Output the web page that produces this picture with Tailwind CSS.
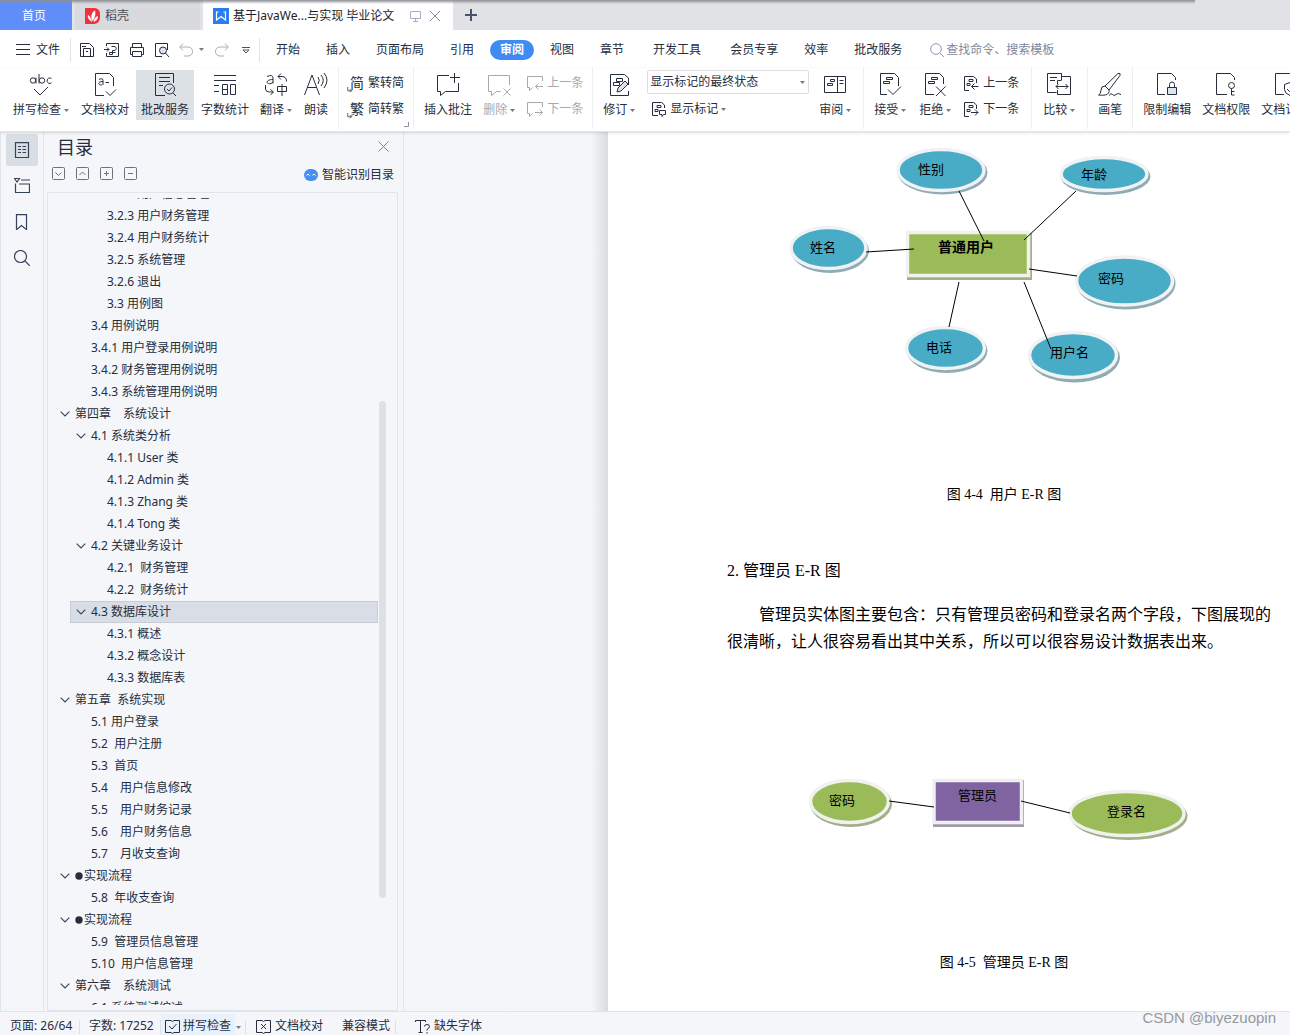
<!DOCTYPE html>
<html lang="zh-CN">
<head>
<meta charset="utf-8">
<meta name="viewport" content="width=device-width, initial-scale=1">
<title>基于JavaWe...与实现 毕业论文</title>
<script src="https://cdn.jsdelivr.net/npm/@tailwindcss/browser@4"></script>
</head>
<body class="relative flex h-screen flex-col overflow-hidden bg-[#f5f6f9] font-['Noto_Sans','Noto_Sans_CJK_SC',sans-serif] text-xs text-[#262d3d]">

<!-- shared symbols -->
<svg class="hidden">
  <symbol id="down" viewBox="0 0 5 3"><path d="M0 0h5L2.500 3z" fill="#6f7a8c"/></symbol>
  <symbol id="chev" viewBox="0 0 10 6"><path d="M.7.700 5 5 9.300.700" fill="none" stroke="#3a4254" stroke-width="1.100"/></symbol>
</svg>

<!-- window tabs -->
<header class="flex h-[30px] shrink-0 bg-[#e1e2e6] leading-4">
  <button class="h-full w-[72px] bg-[#5f8efa] pr-1 pt-[2px] text-white">首页</button>
  <button class="ml-[3px] flex w-[125px] items-center gap-1 bg-[#d9dadd] pl-[10px] pt-[2px] text-[#4a4f59]">
    <svg class="size-4" viewBox="0 0 16 16"><path d="M0 0h10a6 6 0 0 1 5 6v4a6 6 0 0 1-6 6H0z" fill="#ee3340"/><path d="M7 14C4 12 2 9 3 7c2 1 3 3 4 7zM7.500 13C5 8 7 4 10 2.500c1 3 0 8-2.500 10.500zM8.500 14c.5-3 2-5.500 4.500-6 0 3-1.500 5-4.500 6z" fill="#fff"/></svg>
    稻壳</button>
  <div class="ml-[3px] flex w-[250px] items-center bg-white pl-[10px] pt-[2px] text-[#1d222c]">
    <svg class="size-4" viewBox="0 0 16 16"><rect width="16" height="16" fill="#2a7cf3"/><path d="M5.500 4H3.500v8L8 8.500l4.500 3.500V4h-2" fill="none" stroke="#fff" stroke-width="1.200"/></svg>
    <button class="ml-1 whitespace-nowrap">基于JavaWe...与实现 毕业论文</button>
    <button class="ml-4" aria-label="显示器"><svg class="block h-3 w-[11px]" viewBox="0 0 11 12" fill="none" stroke="#a7b0c4"><path d="M.5 1.500h10v7H.5zM5.500 8.500v3M3 11.500h5"/></svg></button>
    <button class="ml-2 text-[#7d89a5]" aria-label="关闭标签"><svg class="block size-3" viewBox="0 0 12 12" fill="none" stroke="currentColor"><path d="m1 1 10 10M11 1 1 11"/></svg></button>
  </div>
  <button class="ml-3 text-[#49536b]" aria-label="新建"><svg class="size-3" viewBox="0 0 12 12" fill="none" stroke="currentColor" stroke-width="2"><path d="M6 0v12M0 6h12"/></svg></button>
</header>
<div class="pointer-events-none absolute left-0 top-0 h-1 w-[1195px] bg-linear-to-b from-[#8d8e92] to-transparent"></div>

<!-- menu row -->
<nav class="flex h-[38px] shrink-0 items-center whitespace-nowrap bg-white pl-4 pt-px leading-5">
  <button class="flex w-[54px] items-center gap-[6px]"><svg class="h-[11px] w-[14px]" viewBox="0 0 14 11" stroke="#262d3d"><path d="M0 .5h14M0 5.500h14M0 10.500h14"/></svg>文件</button>
  <span class="h-6 w-px bg-[#e0e2e6]"></span>
  <div class="ml-2 flex items-center gap-[9px] text-[#262d3d]">
    <button aria-label="保存"><svg class="block size-4" viewBox="0 0 16 16" fill="none" stroke="currentColor"><path d="M1.500 1.500h9l4 4v9h-13zM4.500 14.500v-8h7v8M3 4.500h4M7 9.500h2"/></svg></button>
    <button aria-label="输出PDF"><svg class="block size-4" viewBox="0 0 16 16" fill="none" stroke="currentColor"><path d="M2.500 4V1.500h12v13h-12V11M0 7.500h5M3 5.500l2 2-2 2M7.500 4.500H10c3 0 3 4 0 4H8.500v4H5.500v-2h6"/></svg></button>
    <button aria-label="打印"><svg class="block size-4" viewBox="0 0 16 16" fill="none" stroke="currentColor"><path d="M3.500 5.500v-4h9v4M3.500 12.500h-2v-7h13v7h-2M3.500 9.500h9v5h-9z"/></svg></button>
    <button aria-label="打印预览"><svg class="block size-4" viewBox="0 0 16 16" fill="none" stroke="currentColor"><path d="M8 14.500H1.500v-13h12V8"/><circle cx="9" cy="8.500" r="3.500" fill="#dfe3ea"/><path d="m11.500 11 3.500 4"/></svg></button>
    <button class="flex items-center gap-[6px] text-[#a9adb8]" aria-label="撤销"><svg class="block h-4 w-[14px]" viewBox="0 0 14 16" fill="none" stroke="currentColor"><path d="M4 1.500.700 5 4 8.500M1 5h8c6 0 6 9 0 9H5"/></svg><svg class="h-[3px] w-[5px]"><use href="#down"/></svg></button>
    <button class="ml-[2px] text-[#a9adb8]" aria-label="恢复"><svg class="block h-4 w-[14px]" viewBox="0 0 14 16" fill="none" stroke="currentColor"><path d="M10 1.500 13.300 5 10 8.500M13 5H5c-6 0-6 9 0 9h4"/></svg></button>
    <button class="ml-1" aria-label="更多"><svg class="block size-2" viewBox="0 0 8 8" fill="none" stroke="#4c5464"><path d="M0 1.500h8M1 4l3 3 3-3z"/></svg></button>
  </div>
  <span class="ml-[9px] h-6 w-px bg-[#e0e2e6]"></span>
  <div class="ml-4 flex items-center gap-[26px]">
    <button>开始</button><button>插入</button><button>页面布局</button><button>引用</button>
    <button class="-mx-[10px] rounded-full bg-[#3f8bf3] px-[10px] font-bold text-white">审阅</button>
    <button>视图</button><button>章节</button><button class="px-[3px]">开发工具</button><button>会员专享</button><button>效率</button><button>批改服务</button>
  </div>
  <label class="ml-7 flex grow items-center gap-[2px]"><svg class="size-[14px]" viewBox="0 0 14 14" fill="none" stroke="#8f9bb3"><circle cx="6" cy="6" r="5.300"/><path d="m10 10 4 4"/></svg>
    <input class="w-40 outline-none placeholder:text-[#7d88a3] placeholder:opacity-100" placeholder="查找命令、搜索模板" aria-label="查找命令"></label>
</nav>

<!-- ribbon -->
<div class="z-10 flex h-16 shrink-0 overflow-hidden whitespace-nowrap border-b border-[#e3e5e8] bg-white leading-5 shadow-sm">
  <section class="flex shrink-0 items-start gap-[2px] pl-2 pr-1 pt-[2px]">
    <button class="flex flex-col items-center px-[5px] pt-[2px]"><svg class="mb-[2px] h-[26px] w-6" viewBox="0 0 24 26" fill="none" stroke="#262d3d"><g><circle cx="4" cy="8.500" r="2.700"/><path d="M7 5.500v6M10 2v9.500"/><circle cx="13" cy="8.500" r="2.700"/><path d="M22.500 6.500c-5-2.500-6 5-1.500 5l1.500-.8M5 17l6 6 8-8"/></g></svg><span class="flex items-center gap-[3px]">拼写检查<svg class="h-[3px] w-[5px]"><use href="#down"/></svg></span></button>
    <button class="flex flex-col items-center px-[5px] pt-[2px]"><svg class="mb-[2px] h-[26px] w-6" viewBox="0 0 24 26" fill="none" stroke="#262d3d"><path d="M11 23.500H2.500v-22h14l4 4V14M6 7.500q4-2 4 1v4.500M10 9.500c-6 0-5 4-1 3.500M12.500 10.500H16M13 19.500l4 4 6-6"/></svg>文档校对</button>
    <button class="flex flex-col items-center bg-[#dce1e6] px-[5px] pt-[2px]"><svg class="mb-[2px] h-[26px] w-6" viewBox="0 0 24 26" fill="none" stroke="#262d3d"><path d="M12 23.500H2.500v-22h18V11M6 5.500h11M6 9.500h11M6 13.500h4"/><circle cx="16.500" cy="17" r="5"/><path d="m20 21 3 3M14 17l2 2 3-3.500"/></svg>批改服务</button>
    <button class="flex flex-col items-center px-[5px] pt-[2px]"><svg class="mb-[2px] h-[26px] w-6" viewBox="0 0 24 26" fill="none" stroke="#262d3d"><path d="M1 3.500h22M1 8.500h22M1 13.500h5M1 19.500h5M9.500 12.500h5v10h-5zM9.500 17.500h5M17.500 12.500h5v10h-5z"/></svg>字数统计</button>
    <button class="flex flex-col items-center px-[4px] pt-[2px]"><svg class="mb-[2px] h-[26px] w-6" viewBox="0 0 24 26" fill="none" stroke="#262d3d"><path d="M3 4.500q6-2.500 6 1.500v5.500M9 7.500c-8 0-7 5.500-2 4l2-1.500M17 1.500l-3 3 3 3M14 4.500h4q4.500 0 4.500 5M1.500 13v4q0 3 4 3H9M6.500 17.500l3 2.500-3 3M13.500 14.500h9v5h-9zM18 12v12"/></svg><span class="flex items-center gap-[3px]">翻译<svg class="h-[3px] w-[5px]"><use href="#down"/></svg></span></button>
    <button class="flex flex-col items-center px-[6px] pt-[2px]"><svg class="mb-[2px] h-[26px] w-6" viewBox="0 0 24 26" fill="none" stroke="#262d3d"><path d="M.5 23 8 3l7.500 20M3.500 15.500h9M14 5q2.500 3 0 7M17 3q4.500 5 0 11M20 1q6 7 0 15"/></svg>朗读</button>
  </section>
  <span class="h-[61px] w-px shrink-0 bg-[#eceef0]"></span>
  <section class="relative flex shrink-0 flex-col gap-[6px] px-[9px] pt-[5px]">
    <button class="flex items-center gap-1"><span class="relative w-4 text-right text-sm leading-5">简<svg class="absolute -left-px bottom-0 size-[6px]" viewBox="0 0 8 8" fill="none" stroke="#262d3d"><path d="M1 0v5h5M4 3l2 2-2 2"/></svg></span>繁转简</button>
    <button class="flex items-center gap-1"><span class="relative w-4 text-right text-sm leading-5">繁<svg class="absolute -left-px bottom-0 size-[6px]" viewBox="0 0 8 8" fill="none" stroke="#262d3d"><path d="M1 0v5h5M4 3l2 2-2 2"/></svg></span>简转繁</button>
    <svg class="absolute bottom-1 right-1 size-[5px]" viewBox="0 0 5 5" fill="none" stroke="#8d94a3"><path d="M0 4.500h4.500V0"/></svg>
  </section>
  <span class="h-[61px] w-px shrink-0 bg-[#eceef0]"></span>
  <section class="flex shrink-0 items-start gap-px pl-[5px] pr-[9px] pt-[2px]">
    <button class="flex flex-col items-center px-[5px] pt-[2px]"><svg class="mb-[2px] h-[26px] w-6" viewBox="0 0 24 26" fill="none" stroke="#262d3d"><path d="M13 3.500H1.500v16h3v4l5-4h13V11M18.500 1v10M14 5.500h10"/></svg>插入批注</button>
    <button class="flex flex-col items-center px-[5px] pt-[2px] text-[#a7a9ae]" disabled><svg class="mb-[2px] h-[26px] w-6" viewBox="0 0 24 26" fill="none" stroke="currentColor"><path d="M22.500 13V3.500h-21v16h3v4l5-4h4M16.500 16.500l7 7M23.500 16.500l-7 7"/></svg><span class="flex items-center gap-[3px]">删除<svg class="h-[3px] w-[5px]"><use href="#down"/></svg></span></button>
    <div class="ml-[6px] flex flex-col gap-[6px] pt-[3px] text-[#a7a9ae]">
      <button class="flex items-center gap-1" disabled><svg class="size-4" viewBox="0 0 16 16" fill="none" stroke="currentColor"><path d="M15.500 6V1.500H.5v11h2v3l3-3M16 11.500H8.500M11.500 8.500l-3 3 3 3"/></svg>上一条</button>
      <button class="flex items-center gap-1" disabled><svg class="size-4" viewBox="0 0 16 16" fill="none" stroke="currentColor"><path d="M15.500 6V1.500H.5v11h2v3l3-3M8 11.500h7.500M12.500 8.500l3 3-3 3"/></svg>下一条</button>
    </div>
  </section>
  <span class="h-[61px] w-px shrink-0 bg-[#eceef0]"></span>
  <section class="flex shrink-0 items-start gap-[7px] px-[5px] pt-[2px]">
    <button class="flex flex-col items-center px-[5px] pt-[2px]"><svg class="mb-[2px] h-[26px] w-6" viewBox="0 0 24 26" fill="none" stroke="#262d3d"><path d="M21.500 13V6l-4-3.500h-14v21h18V19M9.500 6.500h6v3h-6zM6.500 10.500h6v3h-6z"/><path d="m10 20 1-4 7-7 3 3-7 7z" fill="#dfe3ea"/></svg><span class="flex items-center gap-[3px]">修订<svg class="h-[3px] w-[5px]"><use href="#down"/></svg></span></button>
    <div class="flex w-[162px] flex-col">
      <div class="relative"><select class="block h-6 w-full appearance-none rounded-xs border border-[#dcdee2] pl-[2px] leading-5" aria-label="显示方式"><option>显示标记的最终状态</option></select><svg class="pointer-events-none absolute right-1 top-[11px] h-[3px] w-[5px]"><use href="#down"/></svg></div>
      <button class="mt-[5px] flex items-center gap-[3px] pl-1"><svg class="size-4" viewBox="0 0 16 16" fill="none" stroke="#262d3d"><path d="M7 14.500H1.500v-13h9l3 2.500v3M6 4.500h4v2H6zM4 8.500h3v2H4zM8.500 9.500h6v4h-2l-1.500 2v-2H8.500z"/></svg>显示标记<svg class="h-[3px] w-[5px]"><use href="#down"/></svg></button>
    </div>
    <button class="flex flex-col items-center px-[3px] pt-[2px]"><svg class="mb-[2px] h-[26px] w-6" viewBox="0 0 24 26" fill="none" stroke="#262d3d"><path d="M1.500 4.500h21v16h-21zM14.500 4.500v16M16.500 8.500h4M16.500 11.500h4M7.500 7.500h4v2h-4zM4.500 11.500h5v2h-5z"/></svg><span class="flex items-center gap-[3px]">审阅<svg class="h-[3px] w-[5px]"><use href="#down"/></svg></span></button>
  </section>
  <span class="ml-1 h-[61px] w-px shrink-0 bg-[#eceef0]"></span>
  <section class="flex shrink-0 items-start gap-[3px] pl-[5px] pr-3 pt-[2px]">
    <button class="flex flex-col items-center px-[5px] pt-[2px]"><svg class="mb-[2px] h-[26px] w-6" viewBox="0 0 24 26" fill="none" stroke="#262d3d"><path d="M9 22.500H2.500v-21h14l4 4V14M8.500 5.500h6v2h-6zM5.500 9.500h6v2h-6zM10 17.500l5 5 8-8"/></svg><span class="flex items-center gap-[3px]">接受<svg class="h-[3px] w-[5px]"><use href="#down"/></svg></span></button>
    <button class="flex flex-col items-center px-[5px] pt-[2px]"><svg class="mb-[2px] h-[26px] w-6" viewBox="0 0 24 26" fill="none" stroke="#262d3d"><path d="M11 22.500H2.500v-21h14l4 4V12M8.500 5.500h6v2h-6zM5.500 9.500h6v2h-6zM13 14.500l9.500 9.500M22.500 14.500 13 24"/></svg><span class="flex items-center gap-[3px]">拒绝<svg class="h-[3px] w-[5px]"><use href="#down"/></svg></span></button>
    <div class="ml-1 flex flex-col gap-[6px] pt-[3px]">
      <button class="flex items-center gap-1"><svg class="size-4" viewBox="0 0 16 16" fill="none" stroke="#262d3d"><path d="M6 15.500H1.500v-14h9l3 2.500v4M6 4.500h4v2H6zM4 8.500h3v2H4zM15.500 11.500H8.500M11.500 8.500l-3 3 3 3"/></svg>上一条</button>
      <button class="flex items-center gap-1"><svg class="size-4" viewBox="0 0 16 16" fill="none" stroke="#262d3d"><path d="M6 15.500H1.500v-14h9l3 2.500v4M6 4.500h4v2H6zM4 8.500h3v2H4zM8 11.500h7M12 8.500l3 3-3 3"/></svg>下一条</button>
    </div>
  </section>
  <span class="h-[61px] w-px shrink-0 bg-[#eceef0]"></span>
  <section class="flex shrink-0 items-start pl-[6px] pr-[7px] pt-[2px]">
    <button class="flex flex-col items-center px-[5px] pt-[2px]"><svg class="mb-[2px] h-[26px] w-6" viewBox="0 0 24 26" fill="none" stroke="#262d3d"><path d="M14.500 8V1.500H.5v19h9M3 5.500h7M3 8.500h5M14.500 4.500h9v18h-13V18M10.500 12V8.500h4M9 14.500h12M11.500 12 9 14.500l2.500 2.500M18.500 12l2.500 2.500-2.500 2.500"/></svg><span class="flex items-center gap-[3px]">比较<svg class="h-[3px] w-[5px]"><use href="#down"/></svg></span></button>
  </section>
  <span class="h-[61px] w-px shrink-0 bg-[#eceef0]"></span>
  <section class="flex shrink-0 items-start px-[5px] pt-[2px]">
    <button class="flex flex-col items-center px-[5px] pt-[2px]"><svg class="mb-[2px] h-[26px] w-6" viewBox="0 0 24 26" fill="none" stroke="#262d3d"><path d="M7 14 20 1.500q3-1 2 2L11 18M7 14l4 4M7 14q-4 0-4 4 0 4-2.500 5Q9 24 10.500 21q1-1.500.5-3M11 23.500q2-3 3.500-1t3.500 0 5 0"/></svg>画笔</button>
  </section>
  <span class="h-[61px] w-px shrink-0 bg-[#eceef0]"></span>
  <section class="flex shrink-0 items-start gap-px pl-[5px] pt-[2px]">
    <button class="flex flex-col items-center px-[5px] pt-[2px]"><svg class="mb-[2px] h-[26px] w-6" viewBox="0 0 24 26" fill="none" stroke="#262d3d"><path d="M10 22.500H2.500v-21h14l4 4V8M14.500 15v-2.500q0-2.500 2.500-2.500t2.500 2.500V15"/><path d="M12.500 15.500h9v7h-9z" fill="#dfe3ea"/></svg>限制编辑</button>
    <button class="flex flex-col items-center px-[5px] pt-[2px]"><svg class="mb-[2px] h-[26px] w-6" viewBox="0 0 24 26" fill="none" stroke="#262d3d"><path d="M13 22.500H2.500v-21h14l4 4V8"/><circle cx="17.500" cy="13.500" r="3"/><path d="M17.500 16.500v6.500h3M17.500 19.500h3"/></svg>文档权限</button>
    <button class="flex flex-col items-center px-[5px] pt-[2px]"><svg class="mb-[2px] h-[26px] w-6" viewBox="0 0 24 26" fill="none" stroke="#262d3d"><path d="M11 22.500H2.500v-21h14l4 4V8M11.500 12.500l5.500-2 5.500 2v5q0 4-5.500 6-5.500-2-5.500-6zM14 17l2.500 2.500L20 16"/></svg>文档认证</button>
  </section>
</div>

<main class="flex min-h-0 grow">
  <!-- icon rail -->
  <aside class="flex w-11 shrink-0 flex-col items-center gap-1 border-x border-[#e1e4ea] pt-[2px] text-[#36415a]">
    <button class="flex size-8 items-center justify-center rounded-xs bg-[#d9dee5]" aria-label="目录"><svg class="size-4" viewBox="0 0 16 16" fill="none" stroke="currentColor" stroke-width="1.200"><path d="M1.500.600h13v15h-13zM4 4.500h3M4 7.500h3M4 10.500h3M8.500 4.500H12M8.500 7.500H12M8.500 10.500H12"/></svg></button>
    <button class="flex size-8 items-center justify-center" aria-label="章节导航"><svg class="size-4" viewBox="0 0 16 16" fill="none" stroke="currentColor" stroke-width="1.200"><path d="M.5.500h5L3 4zM7 2h9M1.500 5.500v9h14V6H5"/></svg></button>
    <button class="flex size-8 items-center justify-center" aria-label="书签"><svg class="size-4" viewBox="0 0 16 16" fill="none" stroke="currentColor" stroke-width="1.200"><path d="M2.500.600h10v15l-5-4-5 4z"/></svg></button>
    <button class="flex size-8 items-center justify-center" aria-label="查找"><svg class="size-4" viewBox="0 0 16 16" fill="none" stroke="currentColor" stroke-width="1.200"><circle cx="6.500" cy="6.500" r="6"/><path d="m11 11 5 5"/></svg></button>
  </aside>

  <!-- outline panel -->
  <section class="flex w-[360px] shrink-0 flex-col border-r border-[#e1e4ea] pl-[3px] pr-[5px]">
    <div class="flex h-[29px] shrink-0 items-center justify-between pl-[10px] pr-[9px]">
      <h1 class="text-lg leading-7">目录</h1>
      <button aria-label="关闭"><svg class="block size-[11px]" viewBox="0 0 11 11" stroke="#7f8795"><path d="m.5.5 10 10M10.500.5l-10 10"/></svg></button>
    </div>
    <div class="flex h-[31px] shrink-0 items-start gap-[11px] pl-[5px] pr-1 pt-[6px] text-[#6c727d]">
      <button aria-label="展开"><svg class="block size-[13px]" viewBox="0 0 13 13" fill="none" stroke="currentColor"><rect x=".5" y=".5" width="12" height="12" rx="1"/><path d="m3.500 5.500 3 3 3-3"/></svg></button>
      <button aria-label="折叠"><svg class="block size-[13px]" viewBox="0 0 13 13" fill="none" stroke="currentColor"><rect x=".5" y=".5" width="12" height="12" rx="1"/><path d="m3.500 8 3-3 3 3"/></svg></button>
      <button aria-label="增加级别"><svg class="block size-[13px]" viewBox="0 0 13 13" fill="none" stroke="currentColor"><rect x=".5" y=".5" width="12" height="12" rx="1"/><path d="M4 6.500h5M6.500 4v5"/></svg></button>
      <button aria-label="减少级别"><svg class="block size-[13px]" viewBox="0 0 13 13" fill="none" stroke="currentColor"><rect x=".5" y=".5" width="12" height="12" rx="1"/><path d="M4 6.500h5"/></svg></button>
      <button class="ml-auto flex items-center gap-1 leading-4 text-[#262d3d]"><svg class="h-3 w-[14px]" viewBox="0 0 14 12"><rect width="14" height="12" rx="6" fill="#4690f0"/><path d="M2.500 6.500 4 5l1.500 1.500M8.500 6.500 10 5l1.500 1.500" fill="none" stroke="#fff"/></svg>智能识别目录</button>
    </div>
    <div class="relative min-h-0 grow basis-0 overflow-hidden rounded-xs border border-[#e1e4ea] py-[5px]">
      <div class="h-full overflow-hidden">
      <ul class="-mt-[15px] leading-[22px] *:whitespace-pre">
        <li class="pl-[59px]">3.2.2 用户信息管理</li>
        <li class="pl-[59px]">3.2.3 用户财务管理</li>
        <li class="pl-[59px]">3.2.4 用户财务统计</li>
        <li class="pl-[59px]">3.2.5 系统管理</li>
        <li class="pl-[59px]">3.2.6 退出</li>
        <li class="pl-[59px]">3.3 用例图</li>
        <li class="pl-[43px]">3.4 用例说明</li>
        <li class="pl-[43px]">3.4.1 用户登录用例说明</li>
        <li class="pl-[43px]">3.4.2 财务管理用例说明</li>
        <li class="pl-[43px]">3.4.3 系统管理用例说明</li>
        <li class="flex items-center gap-[5px] pl-3"><svg class="h-[6px] w-[10px]"><use href="#chev"/></svg>第四章　系统设计</li>
        <li class="flex items-center gap-[5px] pl-[28px]"><svg class="h-[6px] w-[10px]"><use href="#chev"/></svg>4.1 系统类分析</li>
        <li class="pl-[59px]">4.1.1 User 类</li>
        <li class="pl-[59px]">4.1.2 Admin 类</li>
        <li class="pl-[59px]">4.1.3 Zhang 类</li>
        <li class="pl-[59px]">4.1.4 Tong 类</li>
        <li class="flex items-center gap-[5px] pl-[28px]"><svg class="h-[6px] w-[10px]"><use href="#chev"/></svg>4.2 关键业务设计</li>
        <li class="pl-[59px]">4.2.1  财务管理</li>
        <li class="pl-[59px]">4.2.2  财务统计</li>
        <li class="ml-[22px] mr-[19px] flex items-center gap-[5px] bg-[#d9dde5] pl-[6px] outline-1 -outline-offset-1 outline-[#c6cdd5]"><svg class="h-[6px] w-[10px]"><use href="#chev"/></svg>4.3 数据库设计</li>
        <li class="pl-[59px]">4.3.1 概述</li>
        <li class="pl-[59px]">4.3.2 概念设计</li>
        <li class="pl-[59px]">4.3.3 数据库表</li>
        <li class="flex items-center gap-[5px] pl-3"><svg class="h-[6px] w-[10px]"><use href="#chev"/></svg>第五章  系统实现</li>
        <li class="pl-[43px]">5.1 用户登录</li>
        <li class="pl-[43px]">5.2  用户注册</li>
        <li class="pl-[43px]">5.3  首页</li>
        <li class="pl-[43px]">5.4　用户信息修改</li>
        <li class="pl-[43px]">5.5　用户财务记录</li>
        <li class="pl-[43px]">5.6　用户财务信息</li>
        <li class="pl-[43px]">5.7　月收支查询</li>
        <li class="flex items-center pl-3"><svg class="mr-[5px] h-[6px] w-[10px]"><use href="#chev"/></svg><svg class="mr-px size-2" viewBox="0 0 8 8"><circle cx="4" cy="4" r="3.700" fill="#262d3d"/></svg>实现流程</li>
        <li class="pl-[43px]">5.8  年收支查询</li>
        <li class="flex items-center pl-3"><svg class="mr-[5px] h-[6px] w-[10px]"><use href="#chev"/></svg><svg class="mr-px size-2" viewBox="0 0 8 8"><circle cx="4" cy="4" r="3.700" fill="#262d3d"/></svg>实现流程</li>
        <li class="pl-[43px]">5.9  管理员信息管理</li>
        <li class="pl-[43px]">5.10  用户信息管理</li>
        <li class="flex items-center gap-[5px] pl-3"><svg class="h-[6px] w-[10px]"><use href="#chev"/></svg>第六章　系统测试</li>
        <li class="pl-[43px]">6.1 系统测试综述</li>
      </ul>
      </div>
      <div class="absolute right-[11px] top-[208px] h-[497px] w-[7px] rounded-full bg-[#dde1e4]"></div>
    </div>
  </section>

  <!-- document area -->
  <section class="flex min-w-0 grow">
    <div class="w-[204px] shrink-0 bg-linear-to-l from-[#dadbde] to-[#f5f6f9] to-8%"></div>
    <article class="min-w-0 grow overflow-hidden bg-white pl-[119px] pr-[9px] font-['Liberation_Serif','Noto_Sans_CJK_SC',serif] text-black">
      <svg class="block h-[268px] w-[554px]" viewBox="727 132 554 268" font-size="13">
        <g fill="#8fabb5"><ellipse cx="942.500" cy="172.500" rx="45" ry="22"/><ellipse cx="1105.500" cy="176.500" rx="45" ry="18.500"/><ellipse cx="830" cy="250.500" rx="39" ry="22.500"/><ellipse cx="1126" cy="283.500" rx="49.500" ry="26"/><ellipse cx="947" cy="350.500" rx="40.500" ry="22.500"/><ellipse cx="1074.500" cy="357.500" rx="45.500" ry="25"/></g>
        <g fill="#49acc6" stroke="#f0f2f4" stroke-width="3.500"><ellipse cx="941" cy="170" rx="43" ry="20.500"/><ellipse cx="1104" cy="174" rx="43" ry="16.500"/><ellipse cx="828.500" cy="248" rx="37.500" ry="20.500"/><ellipse cx="1124.500" cy="281" rx="48" ry="24"/><ellipse cx="945.500" cy="348" rx="39" ry="20.500"/><ellipse cx="1073" cy="355" rx="43.500" ry="22.500"/></g>
        <path d="M907 233h125v47H907z" fill="#a5ae8b"/><path d="M907.500 232.500h121v43h-121z" fill="#9bbb59" stroke="#f0f2ee" stroke-width="3.500"/>
        <path d="M959 191l25 50M1076 191l-52 49M866 252l48-3M1029 269l48 7M959 282l-10 45M1024 282l27 67" stroke="#000" fill="none"/>
        <text x="918" y="174">性别</text><text x="1081" y="179">年龄</text><text x="810" y="252">姓名</text><text x="1098" y="283">密码</text><text x="926" y="352">电话</text><text x="1050" y="357">用户名</text>
        <text x="938" y="252" font-size="14" font-weight="bold">普通用户</text>
      </svg>
      <p class="mt-[85px] text-center text-sm leading-5">图 4-4&nbsp; 用户 E-R 图</p>
      <h2 class="mt-[54px] text-base leading-6">2. 管理员 E-R 图</h2>
      <p class="mt-[18px] indent-[2em] text-base leading-[27px]">管理员实体图主要包含：只有管理员密码和登录名两个字段，下图展现的很清晰，让人很容易看出其中关系，所以可以很容易设计数据表出来。</p>
      <svg class="mt-[103px] block h-[100px] w-[554px]" viewBox="727 760 554 100" font-size="13">
        <g fill="#a4ad8c"><ellipse cx="851" cy="806" rx="41" ry="23"/><ellipse cx="1129" cy="818" rx="58.500" ry="24"/></g>
        <g fill="#9bbb59" stroke="#f0f2ee" stroke-width="3.500"><ellipse cx="849.500" cy="803.500" rx="39" ry="21"/><ellipse cx="1127" cy="815.500" rx="57" ry="22"/></g>
        <path d="M933 782h91v47h-91z" fill="#a29bab"/><path d="M934 782.500h87.500v42H934z" fill="#8064a2" stroke="#f0f0f3" stroke-width="3.500"/>
        <path d="M889 803l45 6M1021 803l49 12" stroke="#000"/>
        <text x="829" y="807">密码</text><text x="958" y="802">管理员</text><text x="1107" y="818">登录名</text>
      </svg>
      <p class="mt-[95px] text-center text-sm leading-5">图 4-5&nbsp; 管理员 E-R 图</p>
    </article>
  </section>
</main>

<!-- status bar -->
<footer class="relative flex h-6 shrink-0 items-start whitespace-nowrap border-t border-[#e1e3e8] pl-[10px] leading-5">
  <span class="w-[69px] pt-1">页面: 26/64</span><span class="mt-2 h-[14px] w-px bg-[#dfe1e6]"></span>
  <span class="ml-[9px] w-[71px] pt-1">字数: 17252</span><span class="mt-2 h-[14px] w-px bg-[#dfe1e6]"></span>
  <button class="mt-[2px] flex items-center gap-[3px] bg-[#e8f1fc] px-1 pt-[2px]"><svg class="size-[15px]" viewBox="0 0 15 15" fill="none" stroke="#262d3d"><path d="M6 1.500H.5v12H6l1.500 1 1.500-1h5.500v-12H9l-1.500 1zM4 7l3 3 4.500-5"/></svg>拼写检查</button>
  <button class="ml-px mt-[14px]" aria-label="拼写选项"><svg class="block h-[3px] w-[5px]"><use href="#down"/></svg></button>
  <span class="ml-1 mt-2 h-[14px] w-px bg-[#dfe1e6]"></span>
  <button class="ml-[10px] flex items-center gap-1 pt-1"><svg class="size-[15px]" viewBox="0 0 15 15" fill="none" stroke="#262d3d"><path d="M6 1.500H.5v12H6l1.500 1 1.500-1h5.500v-12H9l-1.500 1zM5 5l5 5M10 5l-5 5"/></svg>文档校对</button>
  <button class="ml-[19px] pt-1">兼容模式</button><span class="ml-[5px] mt-2 h-[14px] w-px bg-[#dfe1e6]"></span>
  <button class="ml-[19px] flex items-center gap-1 pt-1"><svg class="size-[15px]" viewBox="0 0 15 15" fill="none" stroke="#262d3d"><path d="M.5 3V1.500h10V3M5.500 1.500v12M3.500 13.500h4M9.500 7.500q0-2 2.500-2t2.500 2q0 1.500-2.500 3v1M12 13v1.500"/></svg>缺失字体</button>
  <span class="absolute -top-1 right-[14px] font-['Liberation_Sans',sans-serif] text-[15px] text-[#96999f]">CSDN @biyezuopin</span>
</footer>
</body>
</html>
